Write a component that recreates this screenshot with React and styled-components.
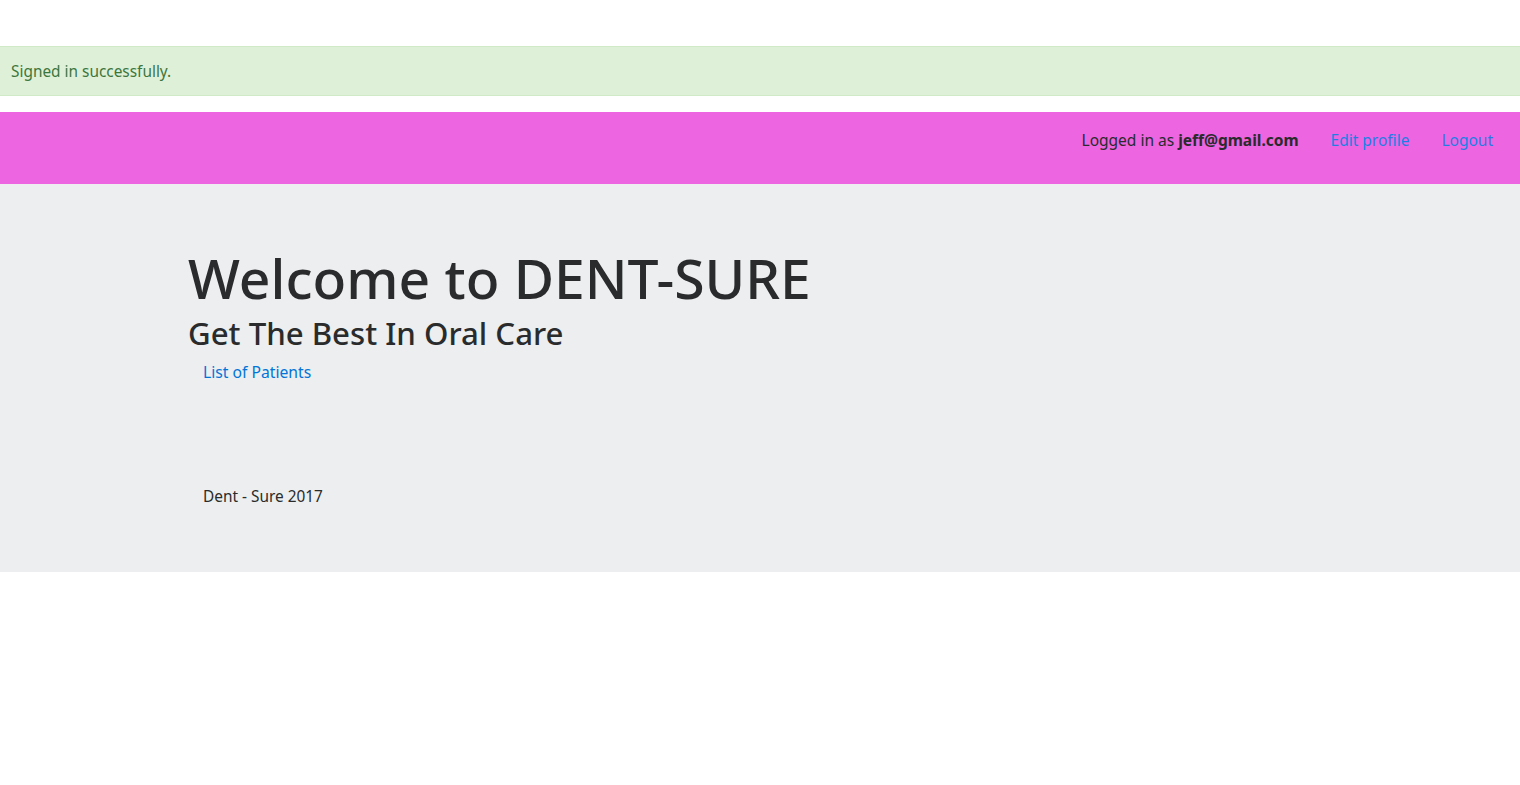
import React from 'react'
import styled, { createGlobalStyle } from 'styled-components'

const GlobalStyle = createGlobalStyle`
    body {
        margin: 0;
        font-family: "Noto Sans", "Open Sans", sans-serif;
        font-size: 16px;
        line-height: 1.5;
        color: #292b2c;
        background: #fff;
    }
`;

const Page = styled.div`
    padding-top: 46px;
`;

const Alert = styled.div`
    box-sizing: border-box;
    height: 50px;
    display: flex;
    align-items: center;
    padding: 1px 11px 0;
    margin-bottom: 16px;
    background: #dff0d8;
    border-top: 1px solid #d0e9c6;
    border-bottom: 1px solid #d0e9c6;
    color: #3c763d;
    font-size: 15.4px;
`;

const Navbar = styled.nav`
    box-sizing: border-box;
    height: 72px;
    background: #ed65e0;
    display: flex;
    justify-content: flex-end;
    align-items: flex-start;
    gap: 32px;
    padding: 17px 27px 0 0;
    font-size: 15.5px;
`;

const NavText = styled.span`
    color: #292b2c;
    b { font-weight: 700; }
`;

const NavLink = styled.a`
    color: #1d7fe6;
    text-decoration: none;
`;

const Jumbotron = styled.section`
    background: #eceeef;
    height: 388px;
    box-sizing: border-box;
    padding-top: 64px;
`;

const Container = styled.div`
    max-width: 1144px;
    margin: 0 auto;
`;

const Title = styled.h1`
    margin: 0 0 6px;
    font-size: 55.2px;
    font-weight: 500;
    line-height: 1.1;
    color: #292b2c;
`;

const SubTitle = styled.h2`
    margin: 0;
    font-size: 31.2px;
    font-weight: 500;
    line-height: 1.2;
    color: #292b2c;
`;

const LinkList = styled.div`
    padding-left: 15px;
    margin-top: 8px;
`;

const Link = styled.a`
    color: #0275d8;
    text-decoration: none;
    font-size: 15.7px;
`;

const Footer = styled.footer`
    padding-left: 15px;
    margin-top: 100px;
    font-size: 15.4px;
`;

const App = () => {
    return (
        <Page>
            <GlobalStyle />
            <Alert>Signed in successfully.</Alert>
            <Navbar>
                <NavText>Logged in as <b>jeff@gmail.com</b></NavText>
                <NavLink href="#">Edit profile</NavLink>
                <NavLink href="#">Logout</NavLink>
            </Navbar>
            <Jumbotron>
                <Container>
                    <Title>Welcome to DENT-SURE</Title>
                    <SubTitle>Get The Best In Oral Care</SubTitle>
                    <LinkList>
                        <Link href="#">List of Patients</Link>
                    </LinkList>
                    <Footer>Dent - Sure 2017</Footer>
                </Container>
            </Jumbotron>
        </Page>
    );
};

export default App
